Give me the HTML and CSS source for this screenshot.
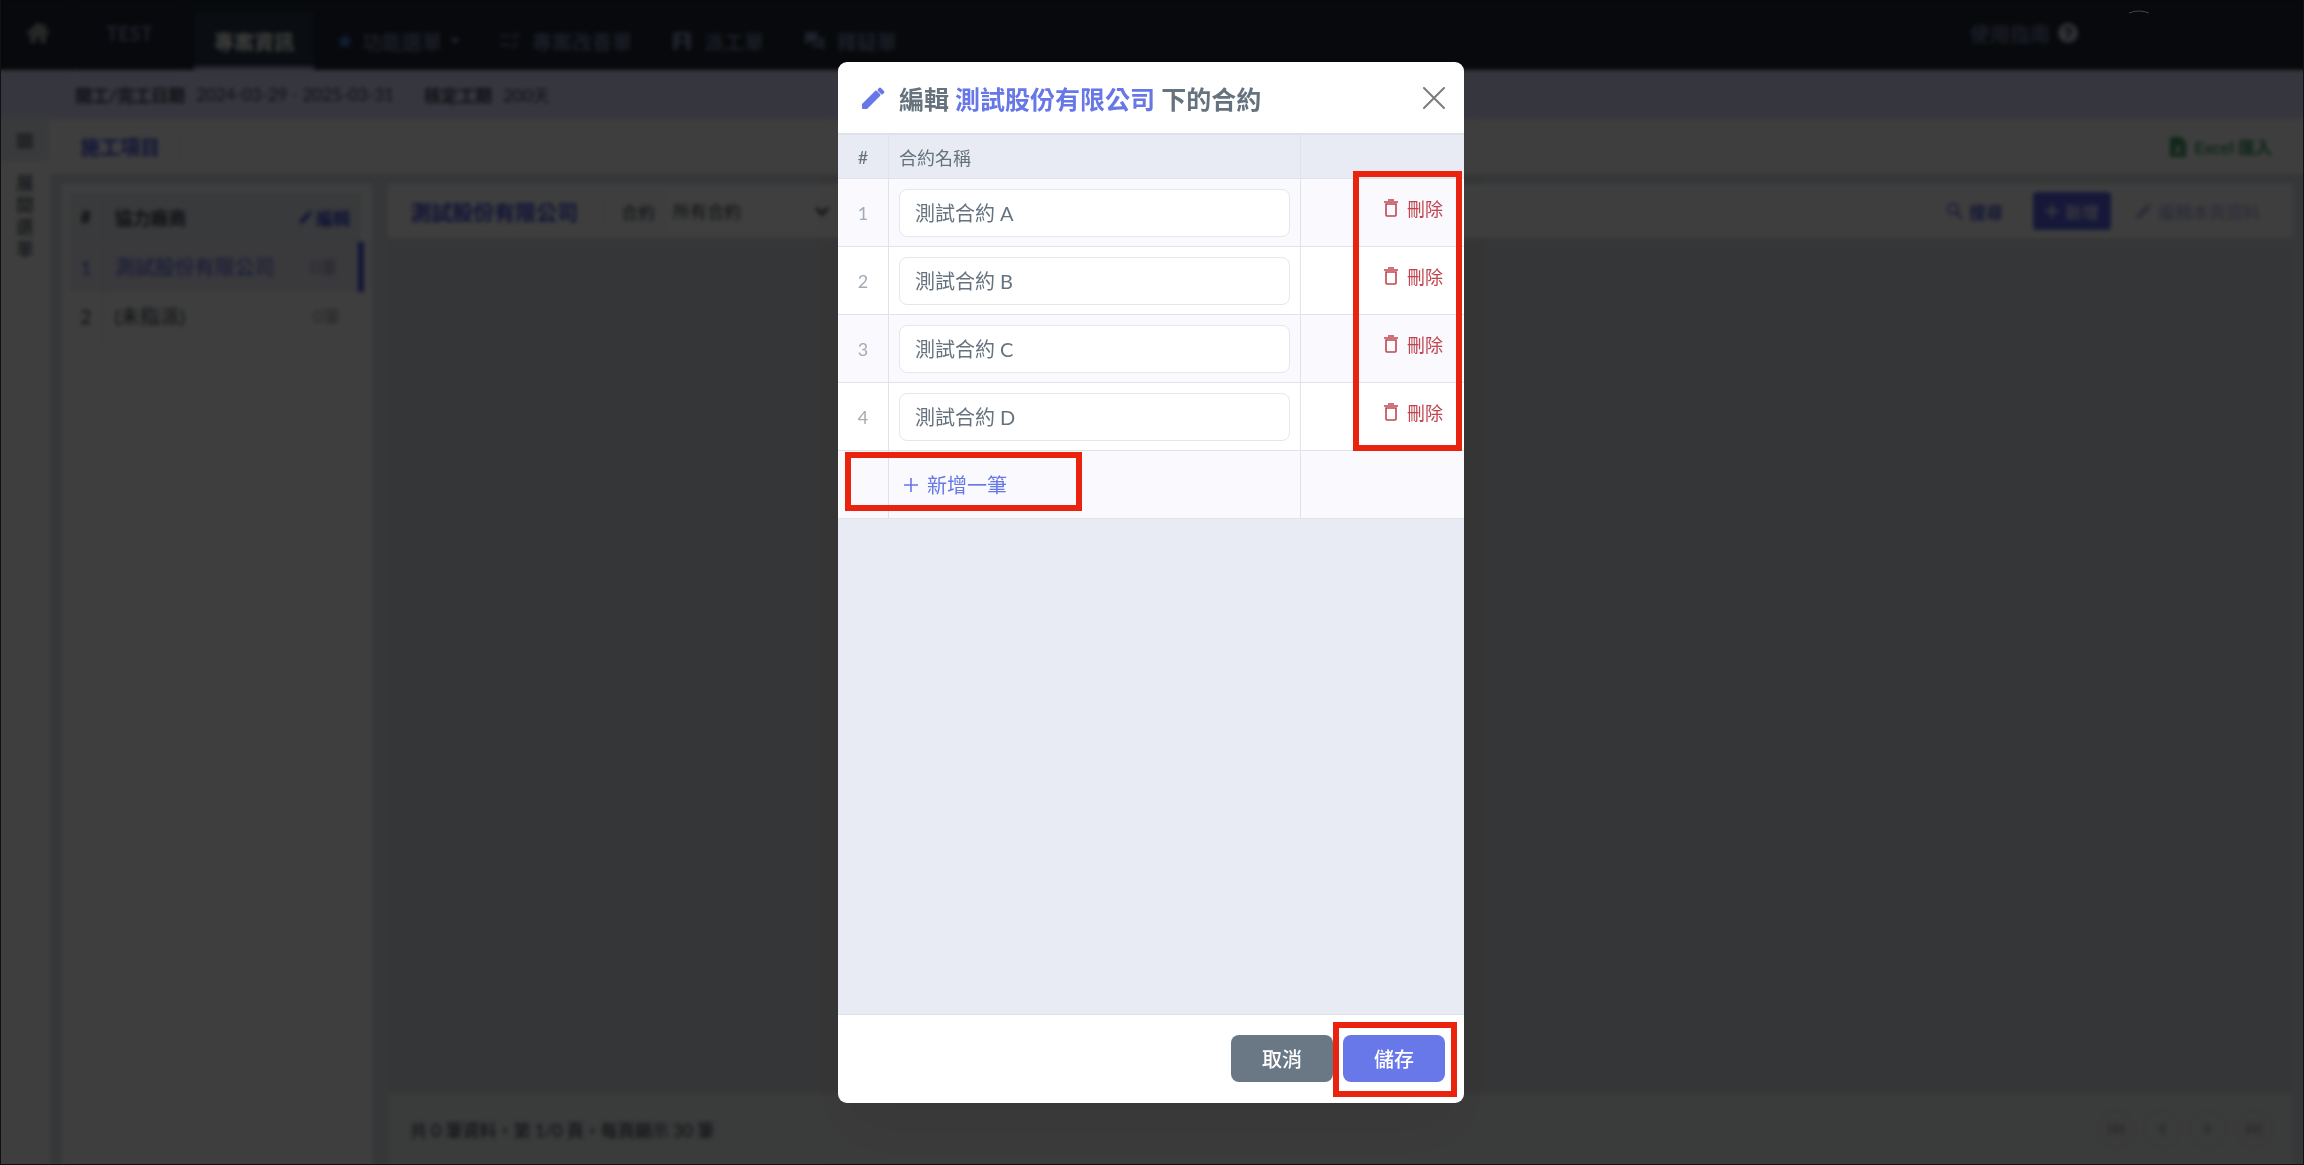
FILE: index.html
```
<!DOCTYPE html>
<html lang="zh-Hant">
<head>
    <meta charset="utf-8">
    <title>TEST</title>
    <link rel="stylesheet" href="styles.css">
</head>
<body>
    <div class="app">
        <nav class="navbar">
            <a class="nav-home" href="#" aria-label="首頁">
                <svg width="24" height="22" viewBox="0 0 24 22"><path fill="currentColor" d="M12 0 0 11l2 2 2-2v10h6v-6h4v6h6V11l2 2 2-2-4-4V2h-3v2z"/></svg>
            </a>
            <a class="nav-project" href="#">TEST</a>
            <div class="nav-tabs">
                <a class="nav-tab active" href="#">專案資訊</a>
                <a class="nav-tab nav-menu" href="#">
                    <svg class="star" width="18" height="18" viewBox="0 0 18 18"><path fill="currentColor" d="m9 1 2.400 5.200 5.600.6-4.200 3.800 1.200 5.600L9 13.400l-5 2.800 1.200-5.600L1 6.800l5.600-.6z"/></svg>
                    功能選單
                    <svg class="caret" width="10" height="6" viewBox="0 0 10 6"><path fill="currentColor" d="M0 0h10L5 6z"/></svg>
                </a>
                <a class="nav-tab" href="#">
                    <svg width="20" height="18" viewBox="0 0 20 18"><path fill="none" stroke="currentColor" stroke-width="2" d="M0 4h10M0 13h10m2-9 2 2 5-5m-7 12 2 2 4-5"/></svg>
                    專案改善單
                </a>
                <a class="nav-tab" href="#">
                    <svg width="20" height="18" viewBox="0 0 20 18"><path fill="currentColor" fill-rule="evenodd" d="M3 0h14l2 2v16h-5v-5l-2-2H8l-2 2v5H1V2zm7 3a3 3 0 1 0 0 6 3 3 0 0 0 0-6"/></svg>
                    派工單
                </a>
                <a class="nav-tab" href="#">
                    <svg width="21" height="18" viewBox="0 0 21 18"><path fill="currentColor" d="M1 0h12l1 1v9H5l-4 3zm15 5h4v13l-4-3H8v-3h8z"/></svg>
                    釋疑單
                </a>
            </div>
            <a class="nav-help" href="#">
                使用指南
                <svg width="20" height="20" viewBox="0 0 20 20"><circle cx="10" cy="10" r="10" fill="#c4c6da"/><path fill="none" stroke="#1c2430" stroke-width="2" d="M7 8q0-3 3-3t3 3-3 3v2m0 1v2"/></svg>
            </a>
        </nav>

        <div class="infobar">
            <b>開工/完工日期</b>
            <span class="info-date">2024-03-29 - 2025-03-31</span>
            <b>核定工期</b>
            <span>200天</span>
        </div>

        <div class="workspace">
            <aside class="sidebar">
                <button class="side-toggle" type="button" aria-label="展開選單">
                    <svg width="16" height="14" viewBox="0 0 16 14"><path stroke="currentColor" stroke-width="2" d="M0 1h16M0 5h16M0 9h16M0 13h16"/></svg>
                </button>
                <span class="side-label">展開選單</span>
            </aside>
            <div class="main">
                <header class="toolbar">
                    <h1>施工項目</h1>
                    <button class="excel" type="button">
                        <svg width="16" height="20" viewBox="0 0 16 20"><path fill="currentColor" fill-rule="evenodd" d="M1 0h10l5 5v15H0V1zm3 8 3 4-3 5h2l2-3 2 3h2l-3-5 3-4h-2l-2 3-2-3z"/></svg>
                        Excel 匯入
                    </button>
                </header>
                <div class="panels">
                    <section class="vendors">
                        <table class="vendor-table">
                            <thead>
                                <tr>
                                    <th class="v-num">#</th>
                                    <th>協力廠商</th>
                                    <th class="v-count">
                                        <button class="vendor-edit" type="button">
                                            <svg width="14" height="14" viewBox="0 0 14 14"><path fill="currentColor" d="m1 10 8-8 3 3-8 8-4 1zm9-9 1-1 3 3-1 1z"/></svg>編輯
                                        </button>
                                    </th>
                                </tr>
                            </thead>
                            <tbody>
                                <tr class="selected">
                                    <td class="v-num">1</td>
                                    <td>測試股份有限公司</td>
                                    <td class="v-count">0筆</td>
                                </tr>
                                <tr>
                                    <td class="v-num">2</td>
                                    <td>(未指派)</td>
                                    <td class="v-count">0筆</td>
                                </tr>
                            </tbody>
                        </table>
                    </section>
                    <section class="items">
                        <div class="items-bar">
                            <h2>測試股份有限公司</h2>
                            <label for="contractFilter">合約</label>
                            <div class="select-wrap">
                                <select id="contractFilter">
                                    <option>所有合約</option>
                                </select>
                                <svg width="14" height="10" viewBox="0 0 14 10"><path fill="none" stroke="currentColor" stroke-width="3" d="m1 2 6 6 6-6"/></svg>
                            </div>
                            <div class="items-actions">
                                <button class="btn-link" type="button">
                                    <svg width="16" height="18" viewBox="0 0 16 18"><path fill="none" stroke="currentColor" stroke-width="2" d="M11 7A5 5 0 1 1 1 7a5 5 0 0 1 10 0m-1 4 5 6"/></svg>搜尋
                                </button>
                                <button class="btn-new" type="button">
                                    <svg width="14" height="14" viewBox="0 0 14 14"><path stroke="currentColor" stroke-width="2" d="M7 0v14M0 7h14"/></svg>新增
                                </button>
                                <button class="btn-page" type="button" disabled>
                                    <svg width="16" height="16" viewBox="0 0 14 14"><path fill="currentColor" d="m1 10 8-8 3 3-8 8-4 1zm9-9 1-1 3 3-1 1z"/></svg>編輯本頁資料
                                </button>
                            </div>
                        </div>
                        <div class="items-body"></div>
                        <footer class="items-footer">
                            <span>共 0 筆資料，第 1/0 頁，每頁顯示 30 筆</span>
                            <div class="pager">
                                <button type="button" disabled aria-label="第一頁"><svg width="16" height="14" viewBox="0 0 16 14"><path fill="currentColor" d="M0 0h2v14H0zm9 0v14L2 7zm7 0v14L9 7z"/></svg></button>
                                <button type="button" disabled aria-label="上一頁"><svg width="16" height="14" viewBox="0 0 16 14"><path fill="currentColor" d="M11 0v14L4 7z"/></svg></button>
                                <button type="button" disabled aria-label="下一頁"><svg width="16" height="14" viewBox="0 0 16 14"><path fill="currentColor" d="M5 0v14l7-7z"/></svg></button>
                                <button type="button" disabled aria-label="最後一頁"><svg width="16" height="14" viewBox="0 0 16 14"><path fill="currentColor" d="M14 0h2v14h-2zM0 0v14l7-7zm7 0v14l7-7z"/></svg></button>
                            </div>
                        </footer>
                    </section>
                </div>
            </div>
        </div>
    </div>

    <div class="overlay">
        <svg class="avatar-edge" width="20" height="4" viewBox="0 0 20 4"><path fill="none" stroke="#444" d="M0 3q10-4 20 0"/></svg>
        <div class="modal" role="dialog" aria-labelledby="modalTitle">
            <header class="modal-header">
                <svg class="modal-pencil" width="24" height="24" viewBox="0 0 24 24"><path fill="currentColor" d="M1 18 14 5q1-1 2 0l3 3q1 1 0 2L6 23H2q-1 0-1-1zM17 3l1-1q1-1 2 0l3 3q1 1 0 2l-1 1q-1 1-2 0l-3-3q-1-1 0-2"/></svg>
                <h2 id="modalTitle">編輯 <span>測試股份有限公司</span> 下的合約</h2>
                <button class="modal-close" type="button" aria-label="關閉">
                    <svg width="22" height="22" viewBox="0 0 22 22"><path fill="none" stroke="currentColor" stroke-width="2" stroke-linecap="round" d="m1 1 20 20M21 1 1 21"/></svg>
                </button>
            </header>
            <div class="modal-body">
                <table class="contracts">
                    <thead>
                        <tr>
                            <th class="num">#</th>
                            <th>合約名稱</th>
                            <th class="action"></th>
                        </tr>
                    </thead>
                    <tbody>
                        <tr>
                            <td class="num">1</td>
                            <td><input type="text" aria-label="合約名稱 1" value="測試合約 A"></td>
                            <td class="action"><button class="delete" type="button"><svg width="14" height="18" viewBox="0 0 14 18"><path fill="none" stroke="currentColor" stroke-width="1.600" d="M0 3h14M4 1h6M2 5v11q0 1 1 1h8q1 0 1-1V5z"/></svg>刪除</button></td>
                        </tr>
                        <tr>
                            <td class="num">2</td>
                            <td><input type="text" aria-label="合約名稱 2" value="測試合約 B"></td>
                            <td class="action"><button class="delete" type="button"><svg width="14" height="18" viewBox="0 0 14 18"><path fill="none" stroke="currentColor" stroke-width="1.600" d="M0 3h14M4 1h6M2 5v11q0 1 1 1h8q1 0 1-1V5z"/></svg>刪除</button></td>
                        </tr>
                        <tr>
                            <td class="num">3</td>
                            <td><input type="text" aria-label="合約名稱 3" value="測試合約 C"></td>
                            <td class="action"><button class="delete" type="button"><svg width="14" height="18" viewBox="0 0 14 18"><path fill="none" stroke="currentColor" stroke-width="1.600" d="M0 3h14M4 1h6M2 5v11q0 1 1 1h8q1 0 1-1V5z"/></svg>刪除</button></td>
                        </tr>
                        <tr>
                            <td class="num">4</td>
                            <td><input type="text" aria-label="合約名稱 4" value="測試合約 D"></td>
                            <td class="action"><button class="delete" type="button"><svg width="14" height="18" viewBox="0 0 14 18"><path fill="none" stroke="currentColor" stroke-width="1.600" d="M0 3h14M4 1h6M2 5v11q0 1 1 1h8q1 0 1-1V5z"/></svg>刪除</button></td>
                        </tr>
                        <tr>
                            <td class="num"></td>
                            <td><button class="add" type="button"><svg width="14" height="14" viewBox="0 0 14 14"><path stroke="currentColor" stroke-width="1.600" d="M7 0v14M0 7h14"/></svg>新增一筆</button></td>
                            <td class="action"></td>
                        </tr>
                    </tbody>
                </table>
            </div>
            <footer class="modal-footer">
                <button class="btn btn-cancel" type="button">取消</button>
                <button class="btn btn-save" type="button">儲存</button>
            </footer>
            <div class="mark mark-delete"></div>
            <div class="mark mark-add"></div>
            <div class="mark mark-save"></div>
        </div>
    </div>
</body>
</html>
```
FILE: styles.css
```
* {
    box-sizing: border-box;
}
body {
    margin: 0;
    font-family: Lato, "Noto Sans CJK TC", sans-serif;
    font-size: 18px;
    color: #3c4650;
    background: #fff;
}
a {
    color: inherit;
    text-decoration: none;
}
button, input, select {
    font: inherit;
    color: inherit;
    margin: 0;
}
button {
    display: inline-flex;
    align-items: center;
    padding: 0;
    border: none;
    background: none;
}
h1, h2 {
    margin: 0;
}

/* page behind the dialog */
.app {
    display: flex;
    flex-direction: column;
    height: 100vh;
}
.navbar {
    display: flex;
    height: 70px;
    background: #1c2430;
    color: #7c86ac;
    font-size: 20px;
    font-weight: 500;
}
.nav-home {
    display: flex;
    align-items: center;
    justify-content: center;
    width: 76px;
    padding-bottom: 4px;
    color: #999;
    border-right: 1px solid #2c3440;
}
.nav-project {
    width: 108px;
    line-height: 67px;
    text-align: center;
    font-weight: bold;
    border-right: 1px solid #2c3440;
}
.nav-tabs {
    display: flex;
    flex: 1;
    gap: 20px;
    padding: 12px 0 0 10px;
}
.nav-tab {
    display: flex;
    align-items: center;
    gap: 12px;
    padding: 0 10px;
}
.nav-tab.active {
    padding: 4px 20px 0;
    color: #f8f8f0;
    font-weight: bold;
    background: #28384a;
    border-bottom: 4px solid #9a9cc8;
}
.nav-menu {
    gap: 8px;
    padding-left: 2px;
}
.star {
    color: #4a74cc;
}
.nav-help {
    display: flex;
    align-items: center;
    gap: 8px;
    padding: 0 226px 4px 0;
}
.infobar {
    display: flex;
    align-items: center;
    gap: 11px;
    height: 49px;
    padding-left: 75px;
    font-size: 17px;
    background: #d8d8f8;
}
.info-date {
    margin-right: 19px;
}
.workspace {
    display: flex;
    flex: 1;
}
.sidebar {
    width: 50px;
    background: #f8f8f8;
}
.side-toggle {
    justify-content: center;
    width: 100%;
    height: 43px;
    background: #e3e8ec;
}
.side-label {
    display: block;
    width: 18px;
    margin: 10px auto;
    line-height: 22px;
}
.main {
    display: flex;
    flex: 1;
    flex-direction: column;
    background: #d6dade;
}
.toolbar {
    display: flex;
    align-items: center;
    justify-content: space-between;
    height: 55px;
    padding: 0 32px 0 30px;
    background: #f8f8f8;
}
.toolbar h1 {
    padding-right: 20px;
    border-right: 1px solid #ddd;
    font-size: 20px;
    line-height: 24px;
    color: #4a52d8;
}
.excel {
    gap: 8px;
    color: #3f9a64;
    font-size: 17px;
    font-weight: bold;
}
.panels {
    display: flex;
    flex: 1;
    gap: 16px;
    padding: 10px 11px 0 12px;
}
.vendors {
    width: 310px;
    padding: 9px 8px;
    background: #f8f8f8;
}
.vendor-table {
    width: 100%;
    table-layout: fixed;
    border-collapse: collapse;
}
.vendor-table th, .vendor-table td {
    height: 49px;
    padding: 0 12px;
    text-align: left;
    white-space: nowrap;
    border-bottom: 1px solid #e8eaee;
}
.vendor-table th {
    background: #e2e6ea;
}
.vendor-table td {
    font-size: 20px;
}
.vendor-table .v-num {
    width: 32px;
    padding: 0;
    text-align: center;
    border-right: 1px solid #d8dce0;
}
.vendor-table .v-count {
    width: 78px;
    font-size: 17px;
    text-align: right;
    color: #99a;
    padding-right: 21px;
}
.vendor-table th.v-count {
    padding: 0 11px 0 0;
}
.vendor-edit {
    gap: 3px;
    color: #4a52d8;
    font-weight: bold;
}
.vendor-table .selected td {
    background: #e6e6f4;
    color: #5a62d8;
}
.vendor-table .selected .v-count {
    color: #99a;
    border-right: 6px solid #4a55d8;
}
.items {
    display: flex;
    flex: 1;
    flex-direction: column;
}
.items-bar {
    display: flex;
    align-items: center;
    height: 54px;
    padding: 0 22px;
    font-size: 17px;
    background: #f8f8f8;
}
.items-bar h2 {
    margin-right: 16px;
    padding-right: 26px;
    border-right: 1px solid #ddd;
    font-size: 21px;
    color: #4a52d8;
}
.select-wrap {
    display: grid;
    grid-template-columns: 1fr 14px 4px;
    align-items: center;
    width: 164px;
    margin-left: 14px;
}
.select-wrap select {
    grid-area: 1 / 1 / 2 / 4;
    height: 38px;
    padding: 0 4px;
    appearance: none;
    background: #fafafa;
    border: none;
}
.select-wrap svg {
    grid-area: 1 / 2;
    pointer-events: none;
}
.items-actions {
    display: flex;
    gap: 14px;
    margin-left: auto;
    color: #5a62d8;
}
.items-actions button {
    gap: 6px;
    height: 38px;
}
.items-actions .btn-link {
    margin-right: 16px;
    font-weight: bold;
}
.items-actions .btn-new {
    padding: 0 12px;
    color: #fff;
    background: #5560e0;
    border-radius: 4px;
}
.items-actions .btn-page {
    padding: 0 10px;
    color: #a4a8dc;
    border: 1px solid #e4e4f0;
    border-radius: 4px;
}
.items-body {
    flex: 1;
    background: #d4d6da;
}
.items-footer {
    display: flex;
    align-items: center;
    justify-content: space-between;
    height: 72px;
    padding: 0 20px 0 22px;
    font-size: 17px;
    color: #2c3640;
    background: #e8e9ec;
}
.pager {
    display: flex;
    gap: 8px;
}
.pager button {
    justify-content: center;
    width: 38px;
    height: 38px;
    border: 1px solid #dfe1e3;
    border-radius: 50%;
    color: #b8babf;
}

/* dialog */
.overlay {
    position: fixed;
    inset: 0;
    display: flex;
    justify-content: center;
    padding: 62px 2px 61px 0;
    background: rgba(0, 0, 0, 0.75);
    backdrop-filter: blur(2px);
    border: 1px solid #111;
    border-width: 0 1px 1px;
}
.avatar-edge {
    position: absolute;
    top: 10px;
    right: 154px;
}
.modal {
    position: relative;
    display: flex;
    flex-direction: column;
    width: 626px;
    background: #fff;
    border-radius: 9px;
    color: #66737f;
    box-shadow: 0 32px 64px rgba(0, 0, 0, 0.06);
}
.modal-header {
    display: flex;
    align-items: center;
    height: 73px;
    padding: 0 19px 0 23px;
    border-bottom: 2px solid #dee2e8;
}
.modal-header h2 {
    flex: 1;
    margin-left: 14px;
    font-size: 25px;
    font-weight: bold;
}
.modal-header span, .modal-pencil {
    color: #6777e8;
}
.modal-close {
    color: #7c7c7c;
}
.modal-body {
    flex: 1;
    background: #e8ebf4;
}
.contracts {
    width: 100%;
    table-layout: fixed;
    border-collapse: separate;
    border-spacing: 0;
}
.contracts th, .contracts td {
    height: 68px;
    padding: 0 10px;
    text-align: left;
    border-right: 1px solid #e0e3ea;
    border-bottom: 1px solid #e0e3ea;
    background: #fff;
}
.contracts th {
    height: 44px;
    font-weight: 400;
    background: #e8ebf4;
}
.contracts tr:nth-child(odd) td {
    background: #f9f9fe;
}
.contracts .num {
    width: 51px;
    padding: 0;
    text-align: center;
}
.contracts td.num {
    color: #a4abb4;
}
.contracts .action {
    width: 163px;
    padding: 16px 21px 0;
    text-align: right;
    vertical-align: top;
    border-right: none;
}
.contracts input {
    display: block;
    width: 100%;
    height: 48px;
    padding: 0 15px;
    font-size: 20px;
    background: #fff;
    border: 1px solid #e4e8ea;
    border-radius: 8px;
}
.delete {
    gap: 9px;
    color: #c0454f;
}
.add {
    gap: 9px;
    padding: 0 5px;
    font-size: 20px;
    color: #6777e8;
}
.modal-footer {
    display: flex;
    justify-content: flex-end;
    gap: 10px;
    padding: 20px 19px 21px;
    border-top: 1px solid #dee2e8;
}
.btn {
    justify-content: center;
    width: 102px;
    height: 47px;
    color: #fff;
    font-size: 20px;
    font-weight: 500;
    border-radius: 8px;
}
.btn-cancel {
    background: #6a7785;
}
.btn-save {
    background: #6878e8;
}

/* highlight frames over the controls */
.mark {
    position: absolute;
    border: 6px solid #ea230f;
    pointer-events: none;
}
.mark-delete {
    top: 109px;
    right: 2px;
    width: 109px;
    height: 280px;
}
.mark-add {
    top: 390px;
    left: 7px;
    width: 237px;
    height: 59px;
}
.mark-save {
    right: 7px;
    bottom: 6px;
    width: 124px;
    height: 75px;
}
```
